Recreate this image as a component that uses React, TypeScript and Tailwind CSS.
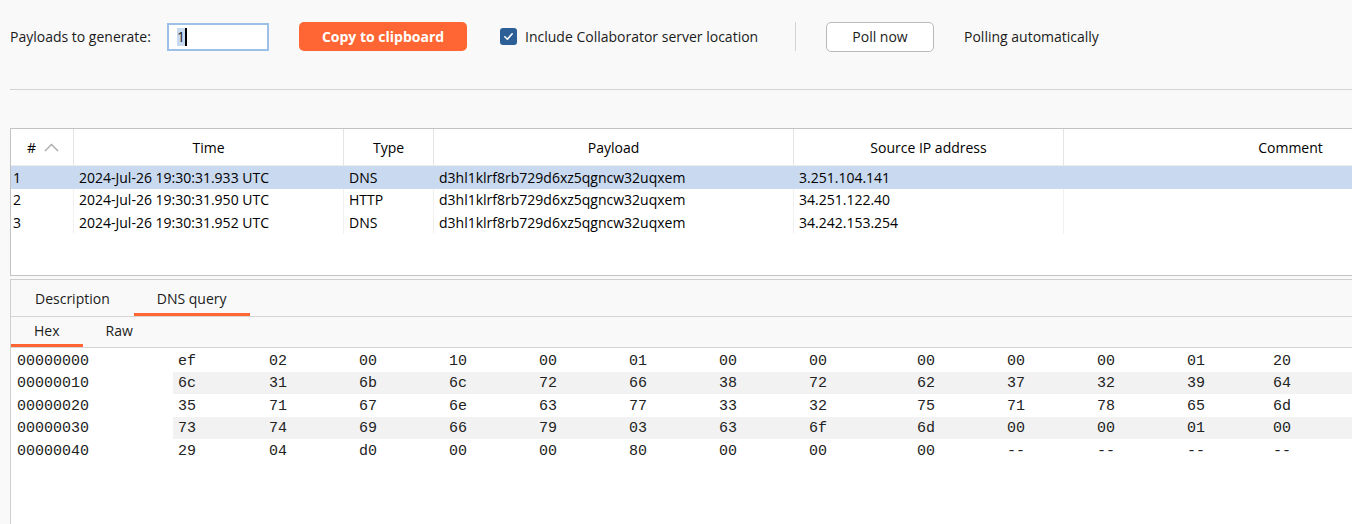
import React from 'react';

const font = { fontFamily: '"Open Sans", "Noto Sans", sans-serif' };

const columns = [
	{ title: 'Time', w: 'w-[270px]' },
	{ title: 'Type', w: 'w-[90px]' },
	{ title: 'Payload', w: 'w-[360px]' },
	{ title: 'Source IP address', w: 'w-[270px]' },
];

const interactions = [
	['1', '2024-Jul-26 19:30:31.933 UTC', 'DNS', 'd3hl1klrf8rb729d6xz5qgncw32uqxem', '3.251.104.141'],
	['2', '2024-Jul-26 19:30:31.950 UTC', 'HTTP', 'd3hl1klrf8rb729d6xz5qgncw32uqxem', '34.251.122.40'],
	['3', '2024-Jul-26 19:30:31.952 UTC', 'DNS', 'd3hl1klrf8rb729d6xz5qgncw32uqxem', '34.242.153.254'],
];

// widths of the byte columns, the eighth one is wider in burp too
const byteWidths = [
	'w-[91px]', 'w-[90px]', 'w-[90px]', 'w-[90px]', 'w-[90px]', 'w-[90px]', 'w-[90px]', 'w-[108px]',
	'w-[90px]', 'w-[90px]', 'w-[90px]', 'w-[86px]', 'w-[90px]',
];

// only the columns that fit in the window
const hexRows = [
	['00000000', 'ef 02 00 10 00 01 00 00 00 00 00 01 20'],
	['00000010', '6c 31 6b 6c 72 66 38 72 62 37 32 39 64'],
	['00000020', '35 71 67 6e 63 77 33 32 75 71 78 65 6d'],
	['00000030', '73 74 69 66 79 03 63 6f 6d 00 00 01 00'],
	['00000040', '29 04 d0 00 00 80 00 00 00 -- -- -- --'],
];

function Toolbar() {
	return (
		<div className="flex items-center h-[29px] mt-[22px] text-[14px] text-[#1b1b1b]" style={font}>
			<div className="w-[167px] pl-[10px]">Payloads to generate:</div>
			<div className="w-[102px] h-[28px] border-2 border-[#9dc0e8] bg-white flex items-center pl-[8px]">
				<span className="bg-[#c8daf1] leading-[18px]">1</span>
				<span className="w-[2px] h-[18px] bg-black"></span>
			</div>
			<button className="ml-[30px] w-[168px] h-[29px] rounded-[5px] bg-[#ff6633] text-white font-bold">
				Copy to clipboard
			</button>
			<div className="ml-[33px] w-[17px] h-[17px] rounded-[3px] bg-[#2c5f96] flex items-center justify-center">
				<svg width="11" height="11" viewBox="0 0 12 12" fill="none">
					<path d="M2 6.3 L4.8 9 L10 3" stroke="white" strokeWidth="1.8" strokeLinecap="round" strokeLinejoin="round" />
				</svg>
			</div>
			<div className="w-[278px] pl-[8px]">Include Collaborator server location</div>
			<div className="w-px h-[29px] bg-[#d4d4d4]"></div>
			<button className="ml-[30px] w-[108px] h-[30px] rounded-[5px] border border-[#b9b9b9] bg-white">
				Poll now
			</button>
			<div className="ml-[30px]">Polling automatically</div>
		</div>
	);
}

function InteractionsTable() {
	return (
		<div className="ml-[10px] mt-[38px] h-[148px] border-l border-t border-b border-[#c3c3c3] bg-white overflow-hidden text-[14px] text-black" style={font}>
			<div className="flex h-[37px] border-b border-[#ededed]">
				<div className="w-[63px] shrink-0 border-r border-[#e4e4e4] flex items-center justify-center gap-[8px] pl-[2px]">
					<span>#</span>
					<svg width="15" height="9" viewBox="0 0 15 9" fill="none">
						<path d="M1 8 L7.5 1.5 L14 8" stroke="#a9a9a9" strokeWidth="1.4" />
					</svg>
				</div>
				{columns.map((c) => (
					<div key={c.title} className={`${c.w} shrink-0 border-r border-[#e4e4e4] flex items-center justify-center`}>
						{c.title}
					</div>
				))}
				<div className="w-[453px] shrink-0 flex items-center justify-center">Comment</div>
			</div>
			{interactions.map((row, i) => {
				const sep = i === 0 ? 'border-[#c9d9ef]' : 'border-[#f1f1f1]';
				return (
					<div key={row[0]} className={`flex h-[22.5px] items-center ${i === 0 ? 'bg-[#c9d9ef]' : ''}`}>
						<div className={`w-[63px] shrink-0 h-full flex items-center pl-[2px] border-r ${sep}`}>{row[0]}</div>
						{columns.map((c, j) => (
							<div key={c.title} className={`${c.w} shrink-0 h-full flex items-center pl-[5px] border-r ${sep}`}>
								{row[j + 1]}
							</div>
						))}
						<div className="w-[453px] shrink-0 h-full"></div>
					</div>
				);
			})}
		</div>
	);
}

function Tab(props: { label: string; active?: boolean; height: string; pad: string }) {
	return (
		<div
			className={`${props.height} ${props.pad} flex items-center border-b-[3px] ${
				props.active ? 'border-[#ff6633]' : 'border-transparent'
			}`}
		>
			{props.label}
		</div>
	);
}

function RequestPanel() {
	return (
		<div className="ml-[10px] mt-[3px] flex-1 border-l border-t border-[#cfcfcf] flex flex-col text-[14px] text-[#1b1b1b]" style={font}>
			<div className="flex h-[37px] border-b border-[#d6d6d6] bg-[#f9f9f9] pt-[1px]">
				<Tab label="Description" height="h-[35px]" pad="px-[24px] pt-[2px]" />
				<Tab label="DNS query" active height="h-[35px]" pad="px-[23px] pt-[2px]" />
			</div>
			<div className="flex h-[31px] border-b border-[#d6d6d6] bg-[#f9f9f9]">
				<Tab label="Hex" active height="h-[30px]" pad="px-[23px]" />
				<Tab label="Raw" height="h-[30px]" pad="px-[23px]" />
			</div>
			<div className="flex-1 bg-white pt-[1px] overflow-hidden text-[15px] text-[#222]" style={{ fontFamily: '"Liberation Mono", monospace' }}>
				{hexRows.map(([offset, bytes], i) => (
					<div key={offset} className="flex h-[22.5px] items-center">
						<div className="w-[162px] shrink-0 pl-[6px] pt-[3px]">{offset}</div>
						<div className={`flex flex-1 h-full items-center pt-[3px] ${i % 2 === 1 ? 'bg-[#f2f2f2]' : ''}`}>
							{bytes.split(' ').map((b, k) => (
								<div key={k} className={`${byteWidths[k]} shrink-0 pl-[5px]`}>
									{b}
								</div>
							))}
						</div>
					</div>
				))}
			</div>
		</div>
	);
}

export default function App() {
	return (
		<div className="w-[1352px] h-[524px] overflow-hidden bg-[#f9f9f9] flex flex-col">
			<Toolbar />
			<div className="ml-[10px] mt-[38px] h-px bg-[#d4d4d4]"></div>
			<InteractionsTable />
			<RequestPanel />
		</div>
	);
}
